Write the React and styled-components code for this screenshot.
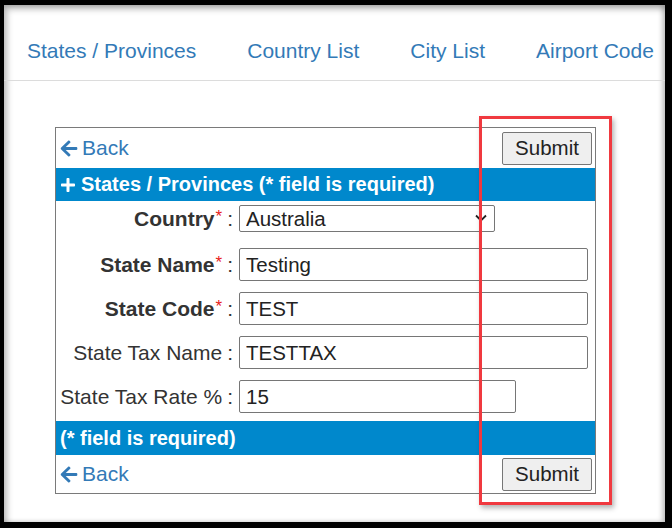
import React from "react";
import styled, { createGlobalStyle } from "styled-components";
import { FaArrowLeft, FaPlus } from "react-icons/fa";

const GlobalStyle = createGlobalStyle`
    html, body {
        margin: 0;
        padding: 0;
        background-color: #000;
        font-family: "Liberation Sans", Arial, sans-serif;
    }
`

const Frame = styled.div`
    position: relative;
    margin: 5px 7px 0 4px;
    height: 517px;
    background-color: #fff;
    box-shadow: inset 3px 4px 6px rgba(0, 0, 0, 0.28), inset -3px 0 5px rgba(0, 0, 0, 0.22);
    overflow: hidden;
`

const Nav = styled.nav`
    display: flex;
    gap: 51px;
    padding: 31px 0 15px 23px;
    border-bottom: 1px solid #dcdcdc;
`

const NavLink = styled.a`
    font-size: 21px;
    line-height: 29px;
    color: #337ab7;
    text-decoration: none;
    white-space: nowrap;
`

const Panel = styled.div`
    margin: 46px 0 0 51px;
    width: 539px;
    border: 1px solid #7a7a7a;
`

const ActionRow = styled.div`
    display: flex;
    align-items: center;
    justify-content: space-between;
    height: ${p => p.$h}px;
    padding: 0 3px 0 4px;
`

const BackLink = styled.a`
    display: flex;
    align-items: center;
    gap: 4px;
    font-size: 21px;
    color: #337ab7;
    text-decoration: none;
    svg {
        width: 18px;
        height: 19px;
    }
`

const Button = styled.button`
    height: 33px;
    width: 90px;
    padding: 0;
    font-family: "Liberation Sans", Arial, sans-serif;
    font-size: 20.5px;
    color: #222;
    background-color: #efefef;
    border: 1px solid #767676;
    border-radius: 2px;
`

const Bar = styled.div`
    display: flex;
    align-items: center;
    gap: 5px;
    height: ${p => p.$h}px;
    padding-left: 4px;
    background-color: #0088cc;
    color: #fff;
    font-weight: bold;
    font-size: 20px;
    svg {
        width: 16px;
        height: 16px;
    }
`

const Body = styled.div`
    padding: 4px 0 8px;
`

const Row = styled.div`
    display: grid;
    grid-template-columns: 177px auto;
    column-gap: 6px;
    align-items: center;
    margin-top: ${p => p.$top || 0}px;
`

const Label = styled.label`
    text-align: right;
    font-size: 21px;
    color: #333;
    font-weight: ${p => (p.$req ? "bold" : "normal")};
    white-space: nowrap;
`

const Star = styled.span`
    color: #e8201a;
    font-size: 17px;
    vertical-align: 4px;
    font-weight: normal;
    margin-left: 1px;
`

const Colon = styled.span`
    font-weight: normal;
    margin-left: 5px;
`

const Input = styled.input`
    box-sizing: border-box;
    width: ${p => p.$w}px;
    height: 33px;
    padding: 0 6px;
    font-family: "Liberation Sans", Arial, sans-serif;
    font-size: 20.5px;
    color: #222;
    border: 1px solid #767676;
    border-radius: 2px;
`

const SelectWrap = styled.div`
    position: relative;
    width: 256px;
    height: 27px;
    svg {
        position: absolute;
        right: 8px;
        top: 9px;
        pointer-events: none;
    }
`

const Select = styled.select`
    box-sizing: border-box;
    appearance: none;
    width: 256px;
    height: 27px;
    padding: 0 6px;
    font-family: "Liberation Sans", Arial, sans-serif;
    font-size: 20.5px;
    color: #222;
    background-color: #fff;
    border: 1px solid #767676;
    border-radius: 2px;
`

const Highlight = styled.div`
    position: absolute;
    left: 475px;
    top: 111px;
    width: 127px;
    height: 383px;
    border: 3px solid #f0393f;
    box-shadow: 2px 3px 5px rgba(0, 0, 0, 0.3);
    pointer-events: none;
`

function Field({ label, req, children, top }) {
    return (
        <Row $top={top}>
            <Label $req={req}>
                {label}
                {req && <Star>*</Star>}
                <Colon>:</Colon>
            </Label>
            <div>{children}</div>
        </Row>
    )
}

function Actions({ h }) {
    return (
        <ActionRow $h={h}>
            <BackLink href="#"><FaArrowLeft />Back</BackLink>
            <Button>Submit</Button>
        </ActionRow>
    )
}

export default function App() {
    return (
        <Frame>
            <GlobalStyle />
            <Nav>
                <NavLink href="#">States / Provinces</NavLink>
                <NavLink href="#">Country List</NavLink>
                <NavLink href="#">City List</NavLink>
                <NavLink href="#">Airport Code</NavLink>
            </Nav>
            <Panel>
                <Actions h={40} />
                <Bar $h={33}><FaPlus />States / Provinces (* field is required)</Bar>
                <Body>
                    <Field label="Country" req>
                        <SelectWrap>
                            <Select defaultValue="au">
                                <option value="au">Australia</option>
                            </Select>
                            <svg width="12" height="8" viewBox="0 0 12 8">
                                <path d="M1 1.5 L6 6.5 L11 1.5" fill="none" stroke="#222" strokeWidth="1.8" />
                            </svg>
                        </SelectWrap>
                    </Field>
                    <Field label="State Name" req top={16}>
                        <Input $w={349} defaultValue="Testing" />
                    </Field>
                    <Field label="State Code" req top={11}>
                        <Input $w={349} defaultValue="TEST" />
                    </Field>
                    <Field label="State Tax Name" top={11}>
                        <Input $w={349} defaultValue="TESTTAX" />
                    </Field>
                    <Field label="State Tax Rate %" top={11}>
                        <Input $w={277} defaultValue="15" />
                    </Field>
                </Body>
                <Bar $h={34}>(* field is required)</Bar>
                <Actions h={38} />
            </Panel>
            <Highlight />
        </Frame>
    )
}
